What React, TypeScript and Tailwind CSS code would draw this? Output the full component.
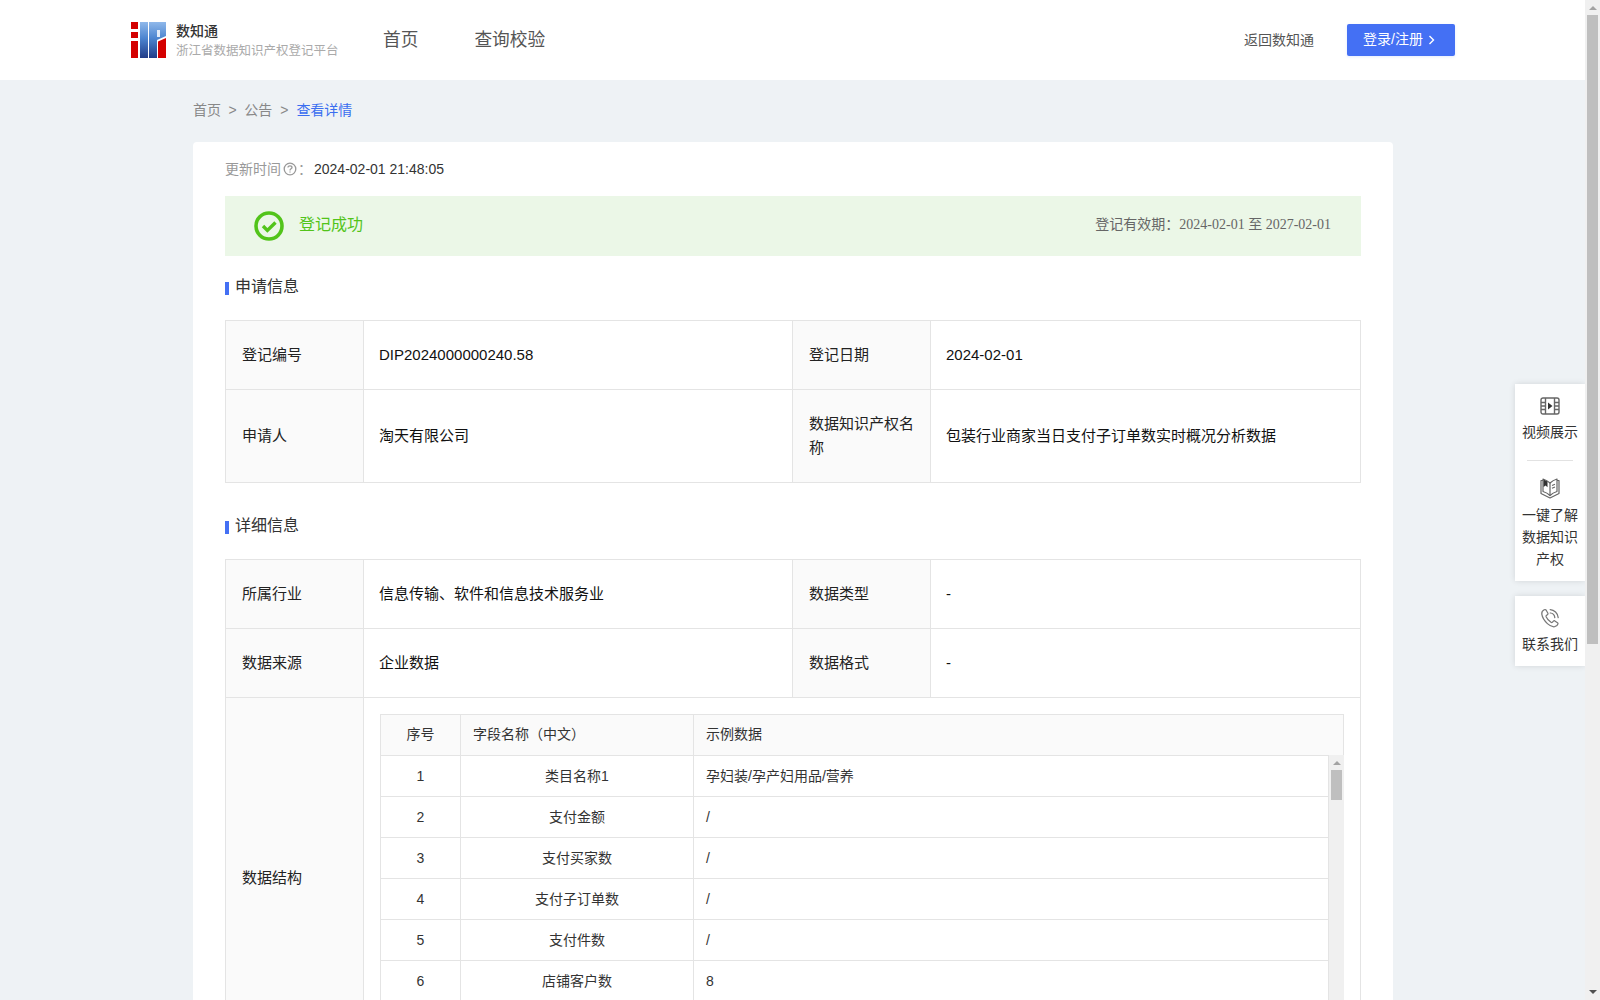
import React from "react";

const FONT = "font-['Liberation_Sans','Noto_Sans_CJK_SC',sans-serif]";

function Logo() {
  return (
    <svg width="35" height="36" viewBox="0 0 35 36" className="shrink-0">
      <defs>
        <linearGradient id="lg" x1="0" y1="0" x2="0" y2="36" gradientUnits="userSpaceOnUse">
          <stop offset="0" stopColor="#8fb8ea" />
          <stop offset="0.45" stopColor="#4d85d0" />
          <stop offset="1" stopColor="#213c88" />
        </linearGradient>
      </defs>
      <rect x="0" y="0" width="7" height="7" fill="#d40000" />
      <rect x="0" y="10" width="7" height="6" fill="#d40000" />
      <rect x="0" y="19" width="7" height="17" fill="#d40000" />
      <rect x="9" y="0" width="8" height="36" fill="url(#lg)" />
      <path d="M18 0H35V14L26 18V36H18Z" fill="url(#lg)" />
      <rect x="26" y="8" width="3" height="7" fill="#e3ecf9" />
      <path d="M27 36V19.5L35 16V36Z" fill="#d40000" />
    </svg>
  );
}

function Film() {
  return (
    <svg width="20" height="18" viewBox="0 0 20 18" fill="none" stroke="#666" strokeWidth="1.4">
      <rect x="1" y="1" width="18" height="16" rx="2" />
      <path d="M5.5 1v16M14.5 1v16M1 5.5h4.5M1 9h4.5M1 12.5h4.5M14.5 5.5h4.5M14.5 9h4.5M14.5 12.5h4.5" />
      <path d="M8 5.5l4.5 3.5L8 12.5Z" fill="#333" stroke="none" />
    </svg>
  );
}

function Book() {
  return (
    <svg width="20" height="21" viewBox="0 0 20 21" fill="none" stroke="#666" strokeWidth="1.2" strokeLinejoin="round">
      <path d="M3 2.5H1V15.5L10 20L19 15.5V2.5H17" />
      <path d="M3 1C5.5 1.8 8 3.2 10 5C11.8 3.4 14 2 17 1V13.5C14.5 14.2 12 15.5 10 17.5C8 15.5 5.5 14.2 3 13.5Z" />
      <path d="M10 5V17.5" />
      <path d="M3.5 1.5L7.5 3.4V9.2L5.6 7.6L3.5 9Z" fill="#333" stroke="none" />
      <path d="M12 7.5L15 6.3M12 10.2L15 9" />
    </svg>
  );
}

function PhoneIcon() {
  return (
    <svg width="20" height="20" viewBox="0 0 20 20" fill="none" stroke="#777" strokeWidth="1.25" strokeLinecap="round" strokeLinejoin="round">
      <path d="M4.2 1.8C2.6 2.6 1.5 4 1.8 6.2C2.3 9.5 4.6 13 7.4 15.6C9.8 17.8 12.6 19 14.6 18.7C16.2 18.4 17.6 17.2 18 15.8C18.1 15.3 17.9 15 17.5 14.7L14.8 12.9C14.3 12.6 13.8 12.7 13.4 13.1L12.3 14.3C11.9 14.6 11.5 14.6 11 14.3C9.2 13.1 7 10.6 6.1 8.7C5.9 8.2 6 7.8 6.4 7.5L7.6 6.6C8 6.2 8.1 5.7 7.9 5.2L6.2 2.2C5.8 1.6 5 1.4 4.2 1.8Z" />
      <path d="M10.2 1.6C14.2 1.8 17.8 5.2 18.2 9.6" />
      <path d="M10.3 5C12.6 5.2 14.6 7.2 14.8 9.6" />
    </svg>
  );
}

function HelpCircle() {
  return (
    <svg width="14" height="14" viewBox="0 0 14 14" fill="none" stroke="#999" strokeWidth="1.3">
      <circle cx="7" cy="7" r="5.8" />
      <path d="M5 5.6C5 4.4 5.9 3.8 7 3.8C8.1 3.8 9 4.5 9 5.5C9 6.8 7 6.9 7 8.4" />
      <path d="M7 9.4v1.2" />
    </svg>
  );
}

function Check() {
  return (
    <svg width="30" height="30" viewBox="0 0 30 30" fill="none">
      <circle cx="15" cy="15" r="13" stroke="#52c41a" strokeWidth="3.6" />
      <path d="M9 15l4.4 4.4L21.5 11.5" stroke="#52c41a" strokeWidth="3.4" />
    </svg>
  );
}

function SectionTitle({ children }: { children: React.ReactNode }) {
  return (
    <div className="flex items-center h-5 text-[16px] text-[#333]">
      <span className="w-1 h-[13px] bg-[#4470f4] mr-[6px] mt-[3px]" />
      {children}
    </div>
  );
}

const LABEL = "border border-[#e4e4e4] bg-[#fafafa] px-4 pb-[1px] text-[15px] leading-6 text-[#222] font-normal text-left";
const VAL = "border border-[#e4e4e4] pl-[15px] pr-4 pb-[1px] text-[15px] leading-6 text-[#111] font-normal text-left";

function Row({ a, b, c, d, h }: { a: string; b: string; c: string; d: string; h: string }) {
  return (
    <tr className={h}>
      <th className={LABEL}>{a}</th>
      <td className={VAL}>{b}</td>
      <th className={LABEL}>{c}</th>
      <td className={VAL}>{d}</td>
    </tr>
  );
}

function Colgroup() {
  return (
    <colgroup>
      <col className="w-[138px]" />
      <col className="w-[429px]" />
      <col className="w-[138px]" />
      <col />
    </colgroup>
  );
}

const FIELDS: [string, string, string][] = [
  ["1", "类目名称1", "孕妇装/孕产妇用品/营养"],
  ["2", "支付金额", "/"],
  ["3", "支付买家数", "/"],
  ["4", "支付子订单数", "/"],
  ["5", "支付件数", "/"],
  ["6", "店铺客户数", "8"],
];

function InnerTable() {
  return (
    <div className="h-[329px] flex flex-col text-[14px] text-[#333]">
      <table className="w-full table-fixed border-collapse">
        <colgroup>
          <col className="w-[80px]" />
          <col className="w-[233px]" />
          <col />
        </colgroup>
        <thead>
          <tr className="h-[41px] bg-[#fafafa]">
            <th className="border border-[#e4e4e4] pb-[2px] font-normal text-center">序号</th>
            <th className="border border-[#e4e4e4] pb-[2px] font-normal text-left pl-3">字段名称（中文）</th>
            <th className="border border-[#e4e4e4] pb-[2px] font-normal text-left pl-3">示例数据</th>
          </tr>
        </thead>
      </table>
      <div className="flex flex-1 -mt-px">
        <table className="flex-1 table-fixed border-collapse self-start">
          <colgroup>
            <col className="w-[80px]" />
            <col className="w-[233px]" />
            <col />
          </colgroup>
          <tbody>
            {FIELDS.map(([n, name, ex]) => (
              <tr key={n} className="h-[41px]">
                <td className="border border-[#e4e4e4] text-center">{n}</td>
                <td className="border border-[#e4e4e4] text-center">{name}</td>
                <td className="border border-[#e4e4e4] pl-3">{ex}</td>
              </tr>
            ))}
          </tbody>
        </table>
        <div className="w-[15px] shrink-0 bg-[#f0f0f0] flex flex-col items-center">
          <span className="mt-[6px] w-0 h-0 border-x-[4px] border-x-transparent border-b-[4px] border-b-[#a3a3a3]" />
          <span className="mt-[5px] w-[11px] h-[30px] bg-[#bfbfbf]" />
        </div>
      </div>
    </div>
  );
}

export default function App() {
  return (
    <div className={`flex h-screen overflow-hidden bg-[#eef2f5] ${FONT}`}>
      <div className="relative flex-1 min-w-0 overflow-hidden">
        <header className="h-20 bg-white flex items-center pl-[131px] pr-[130px]">
          <Logo />
          <div className="ml-[10px] w-[165px] pt-[2px]">
            <div className="text-[14px] leading-[20px] font-medium text-[#333]">数知通</div>
            <div className="text-[12.5px] leading-[20px] text-[#aaa] whitespace-nowrap">浙江省数据知识产权登记平台</div>
          </div>
          <nav className="flex ml-[42px] gap-[56px] text-[17.7px] text-[#555]">
            <span>首页</span>
            <span>查询校验</span>
          </nav>
          <div className="ml-auto flex items-center">
            <span className="text-[14px] text-[#555]">返回数知通</span>
            <button className="ml-[33px] w-[108px] h-8 pb-[2px] pl-[16px] rounded-[2px] bg-[#4470f4] text-white text-[14px] flex items-center gap-[5px] shadow-[0_1px_3px_rgba(68,112,244,0.15)]">
              登录/注册
              <svg width="7" height="10" viewBox="0 0 7 10" fill="none" stroke="#fff" strokeWidth="1.4" className="mt-[1px]">
                <path d="M1.5 1l4 4-4 4" />
              </svg>
            </button>
          </div>
        </header>

        <main className="w-[1200px] ml-[193px]">
          <div className="h-[62px] pb-[2px] flex items-center text-[14px] text-[#888]">
            <span>首页</span>
            <span className="mx-[7.5px]">&gt;</span>
            <span>公告</span>
            <span className="mx-[8px]">&gt;</span>
            <span className="text-[#3a6ef0]">查看详情</span>
          </div>

          <div className="rounded-t-[4px] bg-white px-8 pt-4 pb-8">
            <div className="flex items-center h-[20px] pt-[2px] text-[14px] text-[#999]">
              更新时间
              <span className="ml-[2px]"><HelpCircle /></span>
              <span className="ml-[1px] mr-[3px]">：</span>
              <span className="text-[#333] -ml-[1px]">2024-02-01 21:48:05</span>
            </div>

            <div className="mt-[18px] h-[60px] bg-[#ebf7e7] flex items-center pl-[29px] pr-[30px]">
              <Check />
              <span className="ml-[15px] pb-[2px] text-[16px] text-[#52c41a]">登记成功</span>
              <span className="ml-auto pb-[3px] text-[14px] text-[#666]">
                登记有效期：<span className="font-['Liberation_Serif','Noto_Sans_CJK_SC',serif]">2024-02-01 至 2027-02-01</span>
              </span>
            </div>

            <div className="mt-[21px]">
              <SectionTitle>申请信息</SectionTitle>
            </div>

            <table className="mt-[23px] w-full table-fixed border-collapse">
              <Colgroup />
              <tbody>
                <Row h="h-[69px]" a="登记编号" b="DIP2024000000240.58" c="登记日期" d="2024-02-01" />
                <Row h="h-[93px]" a="申请人" b="淘天有限公司" c="数据知识产权名称" d="包装行业商家当日支付子订单数实时概况分析数据" />
              </tbody>
            </table>

            <div className="mt-[33px]">
              <SectionTitle>详细信息</SectionTitle>
            </div>

            <table className="mt-[23px] w-full table-fixed border-collapse">
              <Colgroup />
              <tbody>
                <Row h="h-[69px]" a="所属行业" b="信息传输、软件和信息技术服务业" c="数据类型" d="-" />
                <Row h="h-[69px]" a="数据来源" b="企业数据" c="数据格式" d="-" />
                <tr>
                  <th className={LABEL}>数据结构</th>
                  <td colSpan={3} className="border border-[#e4e4e4] p-4">
                    <InnerTable />
                  </td>
                </tr>
              </tbody>
            </table>
          </div>
        </main>

        <aside className="absolute right-0 top-[384px] w-[70px] text-[14px] text-[#333] text-center leading-[22px]">
          <div className="bg-white shadow-[0_0_6px_rgba(0,0,0,0.12)] px-[6px] pt-[13px] pb-[11px]">
            <div className="flex justify-center h-[18px]"><Film /></div>
            <div className="mt-[6px]">视频展示</div>
            <div className="mx-[6px] mt-[17px] border-t border-[#e2e2e2]" />
            <div className="mt-[17px] flex justify-center h-[21px]"><Book /></div>
            <div className="mt-[5px]">一键了解数据知识产权</div>
          </div>
          <div className="mt-[15px] bg-white shadow-[0_0_6px_rgba(0,0,0,0.12)] px-[6px] pt-[12px] pb-[11px]">
            <div className="flex justify-center h-5"><PhoneIcon /></div>
            <div className="mt-[5px]">联系我们</div>
          </div>
        </aside>
      </div>

      <div className="w-[15px] shrink-0 bg-[#f0f0f0] flex flex-col items-center">
        <span className="mt-[6px] w-0 h-0 border-x-[4px] border-x-transparent border-b-[4px] border-b-[#a3a3a3]" />
        <span className="mt-[5px] w-[11px] h-[629px] bg-[#bfbfbf]" />
        <span className="mt-auto mb-[6px] w-0 h-0 border-x-[4px] border-x-transparent border-t-[4px] border-t-[#505050]" />
      </div>
    </div>
  );
}
